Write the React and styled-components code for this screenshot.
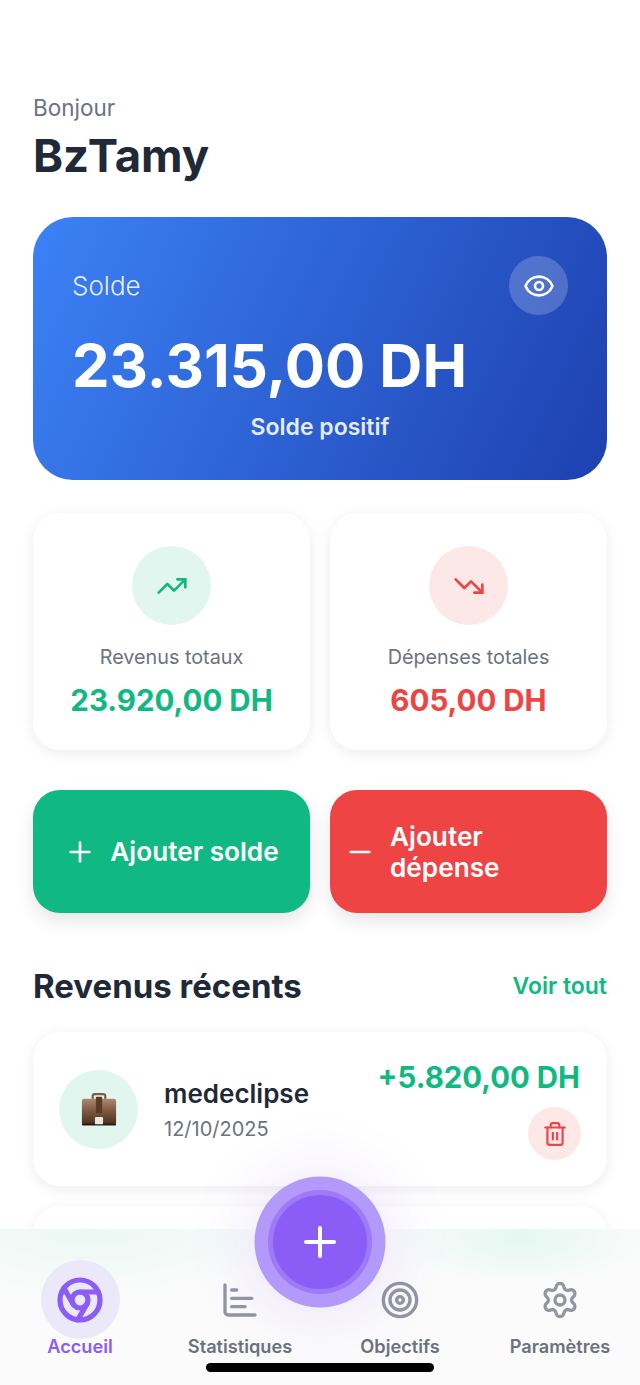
import React from "react";
import styled, { createGlobalStyle } from "styled-components";
import { ChartBar, Chrome, Eye, Minus, Plus, Settings, Target, Trash2, TrendingDown, TrendingUp } from "lucide-react";

const GlobalStyle = createGlobalStyle`
  html, body {
    margin: 0;
    padding: 0;
    background: #fff;
  }
  * {
    box-sizing: border-box;
  }
`;

const Screen = styled.div`
  position: relative;
  width: 640px;
  height: 1385px;
  overflow: hidden;
  background: #fff;
  font-family: Inter, "Liberation Sans", sans-serif;
`;

const Content = styled.main`
  display: flex;
  flex-direction: column;
  padding: 94px 33px 0;
`;

const Greeting = styled.div`
  font-size: 22.5px;
  line-height: 28px;
  color: #6b7280;
`;

const UserName = styled.h1`
  margin: 6px 0 0;
  font-size: 45.5px;
  line-height: 56px;
  font-weight: 700;
  color: #1f2937;
`;

const BalanceCard = styled.section`
  margin-top: 33px;
  height: 263px;
  padding: 39px 39px 0;
  border-radius: 40px;
  background: linear-gradient(115deg, #3b82f6 0%, #1e40af 100%);
  color: #fff;
`;

const BalanceTop = styled.div`
  display: flex;
  justify-content: space-between;
  align-items: center;
`;

const BalanceLabel = styled.span`
  font-size: 26px;
  font-weight: 300;
  color: rgba(255, 255, 255, 0.9);
`;

const EyeButton = styled.div`
  width: 59px;
  height: 59px;
  border-radius: 50%;
  display: flex;
  align-items: center;
  justify-content: center;
  background: rgba(255, 255, 255, 0.2);
`;

const BalanceAmount = styled.div`
  margin-top: 14px;
  font-size: 59.7px;
  line-height: 72px;
  font-weight: 700;
`;

const BalanceStatus = styled.div`
  margin-top: 11px;
  text-align: center;
  font-size: 23px;
  line-height: 30px;
  font-weight: 600;
  color: rgba(255, 255, 255, 0.9);
`;

const TwoColumns = styled.div`
  display: grid;
  grid-template-columns: 1fr 1fr;
  gap: 20px;
  margin-top: ${(p) => p.$top}px;
`;

const StatCard = styled.div`
  height: 237px;
  padding-top: 33px;
  display: flex;
  flex-direction: column;
  align-items: center;
  border-radius: 27px;
  background: #fff;
  box-shadow: 0 3px 14px rgba(0, 0, 0, 0.08);
`;

const IconCircle = styled.div`
  width: 79px;
  height: 79px;
  flex: none;
  border-radius: 50%;
  display: flex;
  align-items: center;
  justify-content: center;
  background: ${(p) => p.$bg};
  color: ${(p) => p.$color};
`;

const StatLabel = styled.div`
  margin-top: 20px;
  font-size: 19.8px;
  line-height: 24px;
  color: #6b7280;
`;

const StatAmount = styled.div`
  margin-top: 13px;
  font-size: 29.5px;
  line-height: 36px;
  font-weight: 700;
  color: ${(p) => p.$color};
`;

const ActionButton = styled.div`
  height: 123px;
  padding: 0 14px;
  display: flex;
  align-items: center;
  justify-content: center;
  gap: 14px;
  border-radius: 27px;
  background: ${(p) => p.$bg};
  color: #fff;
  font-size: 26.2px;
  line-height: 31px;
  font-weight: 600;
  box-shadow: 0 8px 18px rgba(0, 0, 0, 0.1);

  svg {
    flex: none;
  }
`;

const SectionHead = styled.div`
  margin-top: 53px;
  display: flex;
  justify-content: space-between;
  align-items: center;
`;

const SectionTitle = styled.h2`
  margin: 0;
  font-size: 33px;
  line-height: 40px;
  font-weight: 700;
  color: #1f2937;
`;

const SeeAll = styled.span`
  font-size: 23px;
  font-weight: 600;
  color: #10b981;
`;

const IncomeCard = styled.div`
  height: 154px;
  margin-top: ${(p) => p.$top}px;
  padding: 0 26px;
  display: flex;
  align-items: center;
  border-radius: 27px;
  background: #fff;
  box-shadow: 0 3px 14px rgba(0, 0, 0, 0.08);
`;

const IncomeText = styled.div`
  flex: 1;
  margin-left: 26px;
`;

const IncomeName = styled.div`
  font-size: 26px;
  line-height: 34px;
  font-weight: 600;
  color: #1f2937;
`;

const IncomeDate = styled.div`
  margin-top: 5px;
  font-size: 20px;
  line-height: 26px;
  color: #6b7280;
`;

const IncomeRight = styled.div`
  display: flex;
  flex-direction: column;
  align-items: flex-end;
  gap: 9px;
`;

const IncomeAmount = styled.div`
  margin-right: 1px;
  font-size: 29.4px;
  line-height: 40px;
  font-weight: 700;
  color: #10b981;
`;

const DeleteButton = styled.div`
  width: 53px;
  height: 53px;
  border-radius: 50%;
  display: flex;
  align-items: center;
  justify-content: center;
  background: #fde8e8;
  color: #ef4444;
`;

const BottomNav = styled.nav`
  position: absolute;
  left: 0;
  right: 0;
  bottom: 0;
  height: 156px;
  padding-top: 31px;
  display: grid;
  grid-template-columns: repeat(4, 1fr);
  background:
    radial-gradient(ellipse 130px 50px at 520px 8px, #e4f7f0 0%, rgba(228, 247, 240, 0) 100%),
    radial-gradient(ellipse 200px 70px at 90px 0, #eaf8f3 0%, rgba(234, 248, 243, 0) 100%),
    #fbfbfb;
`;

const NavItem = styled.div`
  display: flex;
  flex-direction: column;
  align-items: center;
  font-size: 18.2px;
  line-height: 24px;
  font-weight: 600;
  color: ${(p) => (p.$active ? "#8b5cf6" : "#6b7280")};
`;

const NavIcon = styled.div`
  width: 79px;
  height: 79px;
  margin-bottom: -5px;
  border-radius: 50%;
  display: flex;
  align-items: center;
  justify-content: center;
  background: ${(p) => (p.$active ? "#ebe8f9" : "transparent")};
  color: ${(p) => (p.$active ? "#8b5cf6" : "#9395a3")};
`;

const Fab = styled.div`
  position: absolute;
  left: 273px;
  top: 1195px;
  width: 94px;
  height: 94px;
  border-radius: 50%;
  display: flex;
  align-items: center;
  justify-content: center;
  background: #8b5cf6;
  color: #fff;
  box-shadow:
    0 0 0 5px #9e79f8,
    0 0 0 18.5px #b39afa,
    0 0 60px 30px rgba(139, 92, 246, 0.12);
`;

const HomeBar = styled.div`
  position: absolute;
  left: 206px;
  top: 1363px;
  width: 228px;
  height: 9px;
  border-radius: 5px;
  background: #000;
`;

function Briefcase() {
  return (
    <svg width="36" height="36" viewBox="0 -1 40 40">
      <defs>
        <linearGradient id="case" x1="0" y1="0" x2="0" y2="1">
          <stop offset="0" stopColor="#ad8a70" />
          <stop offset="0.45" stopColor="#805a40" />
          <stop offset="1" stopColor="#4a2d1f" />
        </linearGradient>
      </defs>
      <path d="M13 8V5A2.500 2.500 0 0 1 15.500 2.500h9A2.500 2.500 0 0 1 27 5V8" fill="none" stroke="#7d5c46" strokeWidth="2.4" />
      <rect x="1" y="7.500" width="38" height="29" rx="2.500" fill="url(#case)" />
      <rect x="1" y="35" width="38" height="2.200" rx="1" fill="#2e1a12" />
      <rect x="16.500" y="5.500" width="7" height="18" rx="1" fill="#5b3a28" />
      <rect x="15.500" y="28" width="9" height="8" rx="1" fill="#e8e8e4" />
    </svg>
  );
}

export default function App() {
  return (
    <Screen>
      <GlobalStyle />
      <Content>
        <Greeting>Bonjour</Greeting>
        <UserName>BzTamy</UserName>

        <BalanceCard>
          <BalanceTop>
            <BalanceLabel>Solde</BalanceLabel>
            <EyeButton>
              <Eye size={32} color="#fff" strokeWidth={2} />
            </EyeButton>
          </BalanceTop>
          <BalanceAmount>23.315,00 DH</BalanceAmount>
          <BalanceStatus>Solde positif</BalanceStatus>
        </BalanceCard>

        <TwoColumns $top={33}>
          <StatCard>
            <IconCircle $bg="#e1f6ef" $color="#10b981">
              <TrendingUp size={32} />
            </IconCircle>
            <StatLabel>Revenus totaux</StatLabel>
            <StatAmount $color="#10b981">23.920,00 DH</StatAmount>
          </StatCard>
          <StatCard>
            <IconCircle $bg="#fde8e8" $color="#ef4444">
              <TrendingDown size={32} />
            </IconCircle>
            <StatLabel>Dépenses totales</StatLabel>
            <StatAmount $color="#ef4444">605,00 DH</StatAmount>
          </StatCard>
        </TwoColumns>

        <TwoColumns $top={40}>
          <ActionButton $bg="#10b981">
            <Plus size={32} strokeWidth={2} />
            <span>Ajouter solde</span>
          </ActionButton>
          <ActionButton $bg="#ef4444">
            <Minus size={32} strokeWidth={2} />
            <span>Ajouter dépense</span>
          </ActionButton>
        </TwoColumns>

        <SectionHead>
          <SectionTitle>Revenus récents</SectionTitle>
          <SeeAll>Voir tout</SeeAll>
        </SectionHead>

        <IncomeCard $top={26}>
          <IconCircle $bg="#e1f6ef">
            <Briefcase />
          </IconCircle>
          <IncomeText>
            <IncomeName>medeclipse</IncomeName>
            <IncomeDate>12/10/2025</IncomeDate>
          </IncomeText>
          <IncomeRight>
            <IncomeAmount>+5.820,00 DH</IncomeAmount>
            <DeleteButton>
              <Trash2 size={26} strokeWidth={2} />
            </DeleteButton>
          </IncomeRight>
        </IncomeCard>
        <IncomeCard $top={20} />
      </Content>

      <BottomNav>
        <NavItem $active>
          <NavIcon $active>
            <Chrome size={48} strokeWidth={2.6} />
          </NavIcon>
          Accueil
        </NavItem>
        <NavItem>
          <NavIcon>
            <ChartBar size={40} strokeWidth={2} />
          </NavIcon>
          Statistiques
        </NavItem>
        <NavItem>
          <NavIcon>
            <Target size={40} strokeWidth={2} />
          </NavIcon>
          Objectifs
        </NavItem>
        <NavItem>
          <NavIcon>
            <Settings size={40} strokeWidth={2} />
          </NavIcon>
          Paramètres
        </NavItem>
      </BottomNav>

      <Fab>
        <Plus size={48} strokeWidth={2} />
      </Fab>
      <HomeBar />
    </Screen>
  );
}
